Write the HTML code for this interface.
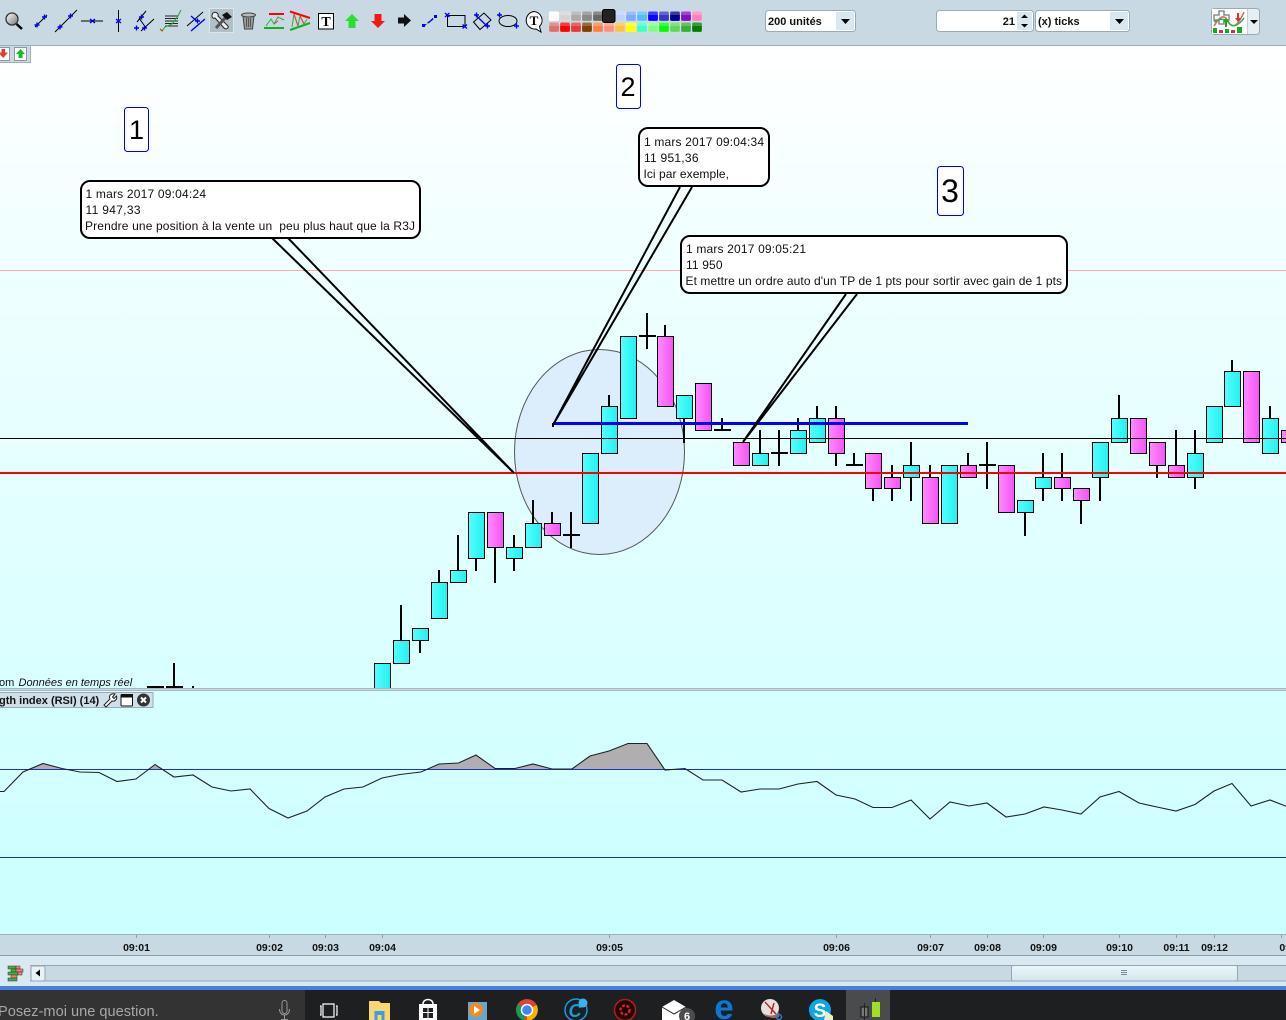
<!DOCTYPE html>
<html><head><meta charset="utf-8"><style>
html,body{margin:0;padding:0;width:1286px;height:1020px;overflow:hidden;background:#c8d9e3}
svg{display:block;font-family:"Liberation Sans",Arial,sans-serif}
.c{fill:url(#gc);stroke:#000;stroke-width:1}
.m{fill:url(#gm);stroke:#000;stroke-width:1}
.t{font-size:12px;fill:#111}
.a{font-size:10.5px;font-weight:bold;fill:#111;text-anchor:middle}
.b{stroke:#00f;stroke-width:1.4;fill:none}
.k{stroke:#000;stroke-width:1;fill:none}
.s{fill:#fff;stroke:#9aabb5;stroke-width:1}
.box{fill:#fff;stroke:#000;stroke-width:2}
.tl{fill:none;stroke:#000;stroke-width:2}
.n{fill:#fff;stroke:#00f;stroke-width:1}
</style></head><body>
<svg width="1286" height="1020" viewBox="0 0 1286 1020" xmlns="http://www.w3.org/2000/svg">
<defs>
<linearGradient id="gc" x1="0" x2="1" y1="0" y2="0"><stop offset="0" stop-color="#55ffff"/><stop offset="1" stop-color="#22f0f0"/></linearGradient>
<linearGradient id="gm" x1="0" x2="1" y1="0" y2="0"><stop offset="0" stop-color="#ff8cff"/><stop offset="1" stop-color="#f552f5"/></linearGradient>
<linearGradient id="bg" x1="0" x2="0" y1="0" y2="1"><stop offset="0" stop-color="#ffffff"/><stop offset=".35" stop-color="#efffff"/><stop offset="1" stop-color="#d9ffff"/></linearGradient>
<linearGradient id="bg2" x1="0" x2="0" y1="0" y2="1"><stop offset="0" stop-color="#d6ffff"/><stop offset="1" stop-color="#ccffff"/></linearGradient>
<linearGradient id="th" x1="0" x2="0" y1="0" y2="1"><stop offset="0" stop-color="#eaf6fa"/><stop offset="1" stop-color="#d4e6ee"/></linearGradient>
<linearGradient id="mg" x1="0" x2="1" y1="0" y2="1"><stop offset="0" stop-color="#fff"/><stop offset="1" stop-color="#777"/></linearGradient>
<clipPath id="cm"><rect x="0" y="46" width="1286" height="642"/></clipPath>
</defs>

<!-- toolbar -->
<rect width="1286" height="45" fill="#c8d9e3"/>
<rect y="45" width="1286" height="1" fill="#9fb0ba"/>

<!-- main chart -->
<rect y="46" width="1286" height="642" fill="url(#bg)"/>
<rect x="0" y="270" width="1286" height="1" fill="#ffaaaa"/>
<ellipse cx="599.5" cy="452" rx="85" ry="102.5" fill="#dcedfb" stroke="#555" stroke-width="1"/>

<g clip-path="url(#cm)">
<path stroke="#000" stroke-width="2" fill="none" d="M401 605V640M420 640V653M439 570V582M458 535V570M476 558V571M495 547V583M514 535V571M533 500V523M552 512V523M571 512V548M563 535H580M609 395V406M647 313V349M639 336H656M665 325V336M684 418V443M722 418V430M714 430H731M760 430V453M779 430V466M771 453H788M798 418V430M817 406V418M836 406V466M854 453V465M846 465H863M873 488V501M892 465V501M911 442V501M930 465V477M968 453V465M987 442V489M979 465H996M1025 512V536M1043 453V501M1062 453V501M1081 500V524M1100 477V501M1119 395V418M1157 465V478M1176 430V465M1195 430V489M1232 360V371M1270 406V418M174 663V687M166 687H183M147 687H164M192 687H194"/>
<rect class="c" x="374.5" y="663.5" width="16" height="30"/>
<rect class="c" x="393.5" y="640.5" width="16" height="23"/>
<rect class="c" x="412.5" y="628.5" width="16" height="12"/>
<rect class="c" x="431.5" y="582.5" width="16" height="36"/>
<rect class="c" x="450.5" y="570.5" width="16" height="12"/>
<rect class="c" x="468.5" y="512.5" width="16" height="46"/>
<rect class="m" x="487.5" y="512.5" width="16" height="35"/>
<rect class="c" x="506.5" y="547.5" width="16" height="11"/>
<rect class="c" x="525.5" y="523.5" width="16" height="24"/>
<rect class="m" x="544.5" y="523.5" width="16" height="12"/>
<rect class="c" x="582.5" y="453.5" width="16" height="70"/>
<rect class="c" x="601.5" y="406.5" width="16" height="47"/>
<rect class="c" x="620.5" y="336.5" width="16" height="82"/>
<rect class="m" x="657.5" y="336.5" width="16" height="70"/>
<rect class="c" x="676.5" y="395.5" width="16" height="23"/>
<rect class="m" x="695.5" y="383.5" width="16" height="47"/>
<rect class="m" x="733.5" y="442.5" width="16" height="23"/>
<rect class="c" x="752.5" y="453.5" width="16" height="12"/>
<rect class="c" x="790.5" y="430.5" width="16" height="23"/>
<rect class="c" x="809.5" y="418.5" width="16" height="24"/>
<rect class="m" x="828.5" y="418.5" width="16" height="35"/>
<rect class="m" x="865.5" y="453.5" width="16" height="35"/>
<rect class="m" x="884.5" y="477.5" width="16" height="11"/>
<rect class="c" x="903.5" y="465.5" width="16" height="12"/>
<rect class="m" x="922.5" y="477.5" width="16" height="46"/>
<rect class="c" x="941.5" y="465.5" width="16" height="58"/>
<rect class="m" x="960.5" y="465.5" width="16" height="12"/>
<rect class="m" x="998.5" y="465.5" width="16" height="47"/>
<rect class="c" x="1017.5" y="500.5" width="16" height="12"/>
<rect class="c" x="1035.5" y="477.5" width="16" height="11"/>
<rect class="m" x="1054.5" y="477.5" width="16" height="11"/>
<rect class="m" x="1073.5" y="488.5" width="16" height="12"/>
<rect class="c" x="1092.5" y="442.5" width="16" height="35"/>
<rect class="c" x="1111.5" y="418.5" width="16" height="24"/>
<rect class="m" x="1130.5" y="418.5" width="16" height="35"/>
<rect class="m" x="1149.5" y="442.5" width="16" height="23"/>
<rect class="m" x="1168.5" y="465.5" width="16" height="12"/>
<rect class="c" x="1187.5" y="453.5" width="16" height="24"/>
<rect class="c" x="1206.5" y="406.5" width="16" height="36"/>
<rect class="c" x="1224.5" y="371.5" width="16" height="35"/>
<rect class="m" x="1243.5" y="371.5" width="16" height="71"/>
<rect class="c" x="1262.5" y="418.5" width="16" height="35"/>
<rect class="m" x="1281.5" y="430.5" width="16" height="12"/>
</g>

<rect x="0" y="438" width="1286" height="1" fill="#000"/>
<rect x="0" y="472" width="1286" height="2" fill="#f00"/>
<rect x="553" y="422" width="415" height="3" fill="#00f"/>

<!-- callout tails -->
<path class="tl" d="M272 238L514 473L288 238"/>
<path class="tl" d="M680 187L553 425L692 187"/>
<rect x="552" y="423" width="2" height="4" fill="#000"/>
<path class="tl" d="M846 294L743 442L857 294"/>

<!-- callouts -->
<rect class="box" x="81" y="181" width="339" height="57" rx="9"/>
<text class="t" x="85.5" y="198" textLength="120.5">1 mars 2017 09:04:24</text>
<text class="t" x="85.5" y="214" textLength="55">11 947,33</text>
<text class="t" x="85" y="230" xml:space="preserve" textLength="330">Prendre une position à la vente un  peu plus haut que la R3J</text>
<rect class="box" x="639" y="128" width="130" height="58" rx="9"/>
<text class="t" x="644" y="146" textLength="120">1 mars 2017 09:04:34</text>
<text class="t" x="644" y="162" textLength="54.500">11 951,36</text>
<text class="t" x="643.5" y="178" textLength="85.500">Ici par exemple,</text>
<rect class="box" x="681" y="236" width="386" height="57" rx="9"/>
<text class="t" x="686" y="253" textLength="120">1 mars 2017 09:05:21</text>
<text class="t" x="686" y="269" textLength="36.500">11 950</text>
<text class="t" x="685.5" y="285" textLength="376.500">Et mettre un ordre auto d'un TP de 1 pts pour sortir avec gain de 1 pts</text>

<!-- number boxes -->
<rect class="n" x="124.5" y="107.5" width="24" height="44" rx="3"/>
<text x="136.5" y="139" font-size="27" text-anchor="middle" fill="#000">1</text>
<rect class="n" x="616.5" y="64.5" width="24" height="44" rx="3"/>
<text x="628" y="96" font-size="27" text-anchor="middle" fill="#000">2</text>
<rect class="n" x="937.5" y="166.5" width="26" height="49" rx="3"/>
<text x="950" y="202" font-size="32" text-anchor="middle" fill="#000">3</text>

<text x="-1" y="686" font-size="11" fill="#111">om</text>
<text x="18.5" y="686" font-size="11" font-style="italic" fill="#111">Données en temps réel</text>

<!-- top-left tab -->
<rect x="0" y="46" width="30" height="16" fill="#c8d9e3"/>
<rect x="0" y="62" width="31" height="1" fill="#9fb0ba"/>
<rect x="30" y="46" width="1" height="17" fill="#9fb0ba"/>
<rect x="-3" y="47.500" width="12.500" height="13" fill="#fff" stroke="#8a9aa4"/>
<path d="M1.500 49H5V52.500H8L3.200 58L-1.500 52.500H1.500Z" fill="#e83838"/>
<rect x="14.500" y="47.500" width="12" height="13" fill="#fff" stroke="#8a9aa4"/>
<path d="M20.500 49L25 54H22.500V58H18.500V54H16Z" fill="#10c020"/>

<!-- RSI panel -->
<rect y="688" width="1286" height="3" fill="#a6b6c0"/>
<rect y="689" width="1286" height="1" fill="#c8d9e3"/>
<rect y="691" width="1286" height="244" fill="url(#bg2)"/>
<path fill="#b0aeae" d="M29 769.500L43 763.500L62 768.500L66 769.500ZM147 769.500L155 764.500L163 769.500ZM428 769.500L439 764L458.500 763L476 755L495 768.500L515 768.500L533 764L552 769.500ZM572 769.500L590 756L609 751L628 743.500L647 743.500L665 769.500Z"/>
<rect y="769" width="1286" height="1" fill="#2030c8"/>
<rect y="857" width="1286" height="1" fill="#2030a0"/>
<polyline fill="none" stroke="#222" stroke-width="1.1" points="-2,791.500 4,791.500 23,772 43,763.500 62,768.500 80,772 99,772.500 117,781.500 136,779 155,764.500 174,777 193,775 212,787 231,791 250,789 269,808.500 288,818 307,811 325,797 344,789 363,787 382,778 400,774.500 421,772 439,764 458.500,763 476,755 495,768.500 515,768.500 533,764 552,769 572,769 590,756 609,751 628,743.500 647,743.500 665,770 685,768.500 703,780 722,780 741,792 760,789 779,789 798,784 817,781.500 836,795 855,799 873,807.500 892,807.500 911,800 930,819 950,802 969,806 987,803 1006,817 1025,814 1044,807 1062,810 1081,814 1100,797 1119,791.500 1139,803 1157,807 1176,811 1195,804.500 1214,791 1232,783.500 1251,806 1270,800 1288,807"/>

<!-- RSI tab -->
<rect x="-2" y="692.500" width="155" height="15" fill="#d0e0ea" stroke="#9aabb5"/>
<text x="-1" y="704" font-size="11" font-weight="bold" fill="#111">gth index (RSI) (14)</text>
<path d="M104 705L110 699C108 695 112 693 115 694L112.500 697L114 698.500L116.500 696C117.500 699 115 702 112 701L106 707Z" fill="#fff" stroke="#222" stroke-width="1"/>
<rect x="121" y="694.500" width="11.500" height="11.500" rx="1" fill="#fff" stroke="#111"/>
<rect x="121" y="694" width="12" height="3.500" fill="#111"/>
<circle cx="143.500" cy="700" r="6.500" fill="#333"/>
<path d="M141 697.500L146 702.500M146 697.500L141 702.500" stroke="#fff" stroke-width="2"/>

<!-- time axis -->
<rect y="935" width="1286" height="20" fill="#c8d9e3"/>
<rect y="934" width="1286" height="1" fill="#9fb0ba"/>
<rect y="955" width="1286" height="1" fill="#8e9ea8"/>
<path stroke="#8e9ea8" d="M136.500 935V938M269.500 935V938M325.500 935V938M382.500 935V938M609.500 935V938M836.500 935V938M930.500 935V938M987.500 935V938M1043.500 935V938M1119.500 935V938M1176.500 935V938M1214.500 935V938M1281.500 935V938"/>
<text class="a" x="136.500" y="951">09:01</text>
<text class="a" x="269.500" y="951">09:02</text>
<text class="a" x="325.500" y="951">09:03</text>
<text class="a" x="382.500" y="951">09:04</text>
<text class="a" x="609.500" y="951">09:05</text>
<text class="a" x="836.500" y="951">09:06</text>
<text class="a" x="930.500" y="951">09:07</text>
<text class="a" x="987.500" y="951">09:08</text>
<text class="a" x="1043.500" y="951">09:09</text>
<text class="a" x="1119.500" y="951">09:10</text>
<text class="a" x="1176.500" y="951">09:11</text>
<text class="a" x="1214.500" y="951">09:12</text>
<text class="a" x="1287" y="951">09:</text>

<!-- scroll bar -->
<rect y="956" width="1286" height="30" fill="#d9e9f2"/>
<rect x="30" y="965" width="1256" height="16" fill="#c8d9e3"/>
<rect x="30" y="965" width="1256" height="1" fill="#96a6b0"/>
<rect x="30" y="980.500" width="1256" height="1" fill="#96a6b0"/>
<rect x="31" y="966" width="14" height="15" rx="2" fill="#e8f3f8" stroke="#96a6b0"/>
<path d="M40 969.500V976.500L35.500 973Z" fill="#000"/>
<rect x="1011.500" y="965.500" width="226" height="15.500" rx="2" fill="url(#th)" stroke="#96a6b0"/>
<path d="M1121 970.500H1127M1121 972.500H1127M1121 974.500H1127" stroke="#7a8a94"/>
<g stroke="#333" stroke-width=".5">
<rect x="8" y="966" width="8" height="3" fill="#40b040"/><rect x="16" y="966" width="4" height="3" fill="#f08080"/>
<rect x="11" y="969" width="8" height="3" fill="#40b040"/><rect x="16" y="969" width="7" height="3" fill="#f08080"/>
<rect x="8" y="972" width="10" height="3" fill="#40b040"/><rect x="18" y="972" width="4" height="3" fill="#f08080"/>
<rect x="11" y="975" width="6" height="3" fill="#f08080"/><rect x="8" y="978" width="9" height="3" fill="#40b040"/>
</g>

<!-- taskbar -->
<rect y="986" width="1286" height="4" fill="#4a7fe0"/>
<rect y="990" width="1286" height="30" fill="#1d1f20"/>
<rect y="990" width="305" height="30" fill="#333333"/>
<text x="-2" y="1016" font-size="14.600" fill="#a8a8a8">Posez-moi une question.</text>
<path d="M282 1003a2.500 2.500 0 0 1 5 0V1011a2.500 2.500 0 0 1-5 0ZM279.500 1009c0 8 10 8 10 0M284.500 1015V1019M281 1019.500H288" fill="none" stroke="#999" stroke-width="1"/>
<path d="M323 1004H334V1017H323ZM320 1006H321V1015H320M336 1006H337V1015H336" fill="none" stroke="#fff" stroke-width="1.200"/>
<!-- folder -->
<path d="M369 1001H379L381 1003H390V1020H369Z" fill="#f7d674"/>
<rect x="374.500" y="1011" width="10" height="9" fill="#3aa0dc"/><rect x="377.500" y="1015" width="4" height="5" fill="#f7d674"/>
<!-- store -->
<path d="M419 1004H437V1020H419Z" fill="#fff"/>
<path d="M423 1004C423 998 433 998 433 1004" fill="none" stroke="#fff" stroke-width="1.500"/>
<path d="M423 1008H427.500V1012H423ZM428.500 1008H433V1012H428.500ZM423 1013H427.500V1018H423ZM428.500 1013H433V1018H428.500Z" fill="#1d1f20"/>
<!-- media -->
<rect x="468" y="1002" width="19" height="18" fill="#6aa6c8"/>
<circle cx="476" cy="1010" r="7" fill="#f58a1f"/><path d="M474 1006L480 1010L474 1014Z" fill="#fff"/>
<!-- chrome -->
<circle cx="527" cy="1010" r="11" fill="#db4437"/>
<path d="M527 1010L518 1004A11 11 0 0 0 524 1020.500Z" fill="#0f9d58"/>
<path d="M527 1010L536.500 1005A11 11 0 0 1 527 1021Z" fill="#f4b400"/>
<circle cx="527" cy="1010" r="5.500" fill="#4285f4" stroke="#fff" stroke-width="1.500"/>
<!-- C icon -->
<circle cx="576" cy="1010" r="11" fill="none" stroke="#1a9ce0" stroke-width="1.500"/>
<text x="575" y="1017" font-size="18" font-style="italic" font-weight="bold" fill="#1a9ce0" text-anchor="middle">C</text>
<circle cx="583" cy="1003" r="4.500" fill="#35b5f0"/>
<!-- red -->
<circle cx="625" cy="1010" r="10.500" fill="#1a0808" stroke="#c01818" stroke-width="1.500"/>
<circle cx="625" cy="1010" r="4.500" fill="none" stroke="#d82020" stroke-width="2.500" stroke-dasharray="3 1.500"/>
<!-- mail -->
<path d="M662 1007L674 1000L686 1007V1020H662Z" fill="#fff"/><path d="M662 1007L674 1014L686 1007" fill="none" stroke="#1d1f20"/>
<circle cx="687" cy="1016" r="8" fill="#4d4d4d"/>
<text x="687" y="1020" font-size="11" font-weight="bold" fill="#fff" text-anchor="middle">6</text>
<!-- edge -->
<text x="724" y="1019" font-size="35" font-weight="bold" fill="#0a78d4" text-anchor="middle">e</text>
<!-- scissor -->
<ellipse cx="770" cy="1008" rx="9" ry="9" fill="#e6e0de"/><path d="M763 1013C768 1017 776 1016 779 1012L779 1017C774 1019 767 1018 763 1013Z" fill="#b06060"/>
<path d="M765 1002L776 1014M774 1003L771 1014" stroke="#b52a2a" stroke-width="1.500"/>
<circle cx="779" cy="1017" r="2.500" fill="none" stroke="#2a7cc0" stroke-width="1.500"/>
<!-- skype -->
<circle cx="820" cy="1010" r="11" fill="#12a5e6"/>
<text x="820" y="1017" font-size="19" font-weight="bold" fill="#fff" text-anchor="middle">S</text>
<path d="M826 1011L833 1016V1020H824Z" fill="#e8f0c8"/>
<!-- active -->
<rect x="846" y="990" width="44" height="30" fill="#4a4b4d"/>
<rect x="861" y="1007" width="7" height="10" fill="#777" stroke="#111"/>
<rect x="872" y="1002" width="8" height="15" fill="#9fe020"/>
<path d="M864.500 1003V1020M875.500 998V1002" stroke="#222"/>

<!-- toolbar icons -->
<rect x="209.500" y="8.500" width="24" height="24" fill="#b0c0c8" stroke="#dbe6ec"/>
<circle cx="12" cy="19" r="6" fill="url(#mg)" stroke="#333" stroke-width="1.300"/>
<path d="M16.500 24L22 29" stroke="#000" stroke-width="2.500"/>
<path class="k" d="M35 27L47 15"/>
<path class="b" d="M34.500 25H39.500M37 22.500V27.500M42 17H47M44.500 14.500V19.500"/>
<path class="k" d="M55 32L77 10"/>
<path class="b" d="M57.500 27H62.500M60 24.500V29.500M68 16H73M70.500 13.500V18.500"/>
<path class="k" d="M81 21H103"/>
<path class="b" d="M90 19L95 23M95 19L90 23"/>
<path class="k" d="M118.500 10V32"/>
<path class="b" d="M116 19L121 23M121 19L116 23"/>
<path class="k" d="M137 22L146 11M141 31L154 19M139 18L146 28"/>
<path class="b" d="M134 28H139M136.500 25.500V30.500M142 28H147M144.500 25.500V30.500M139 17H144M141.500 14.500V19.500"/>
<path d="M165 16H178M165 18.500H178M165 21H178M165 23.500H178M165 26H178" stroke="#222" stroke-width="1"/>
<path d="M160 29L162 31L165 27L172 24L178 16L181 10" fill="none" stroke="#18b030" stroke-width="1"/>
<path d="M160 29L163 31" stroke="#e03030"/>
<path class="k" d="M187 26L203 12"/>
<path class="b" d="M191 31L205 19M191 16L198 22M195 21H200M197.500 18.500V23.500"/>
<!-- tools -->
<path d="M213 13C216 11 219 14 218 16L228 26C229 28 226 30 224 28L215 18C212 19 211 16 213 13Z" fill="#eee" stroke="#222" stroke-width="1"/>
<path d="M216 28L226 17" stroke="#555" stroke-width="3"/>
<path d="M222 15L227 12L232 17L227 20Z" fill="#111"/>
<!-- trash -->
<path d="M243 16H254L252.500 29H244.500Z" fill="#9a9a9a" stroke="#444"/>
<ellipse cx="248.500" cy="15" rx="7" ry="2" fill="#bbb" stroke="#444"/>
<path d="M246.500 18V27M248.500 18V27M250.500 18V27" stroke="#555"/>
<!-- channel -->
<rect x="269" y="13" width="15" height="2" fill="#f00"/><rect x="264" y="27" width="20" height="2" fill="#10b020"/>
<path d="M266 26L271 19L274 24L278 17L284 20" fill="none" stroke="#30b040"/>
<path d="M274 24L278 21" stroke="#e04040"/>
<path d="M290 11.500L310 18" stroke="#f00" stroke-width="2"/><path d="M290 30L310 23" stroke="#10b020" stroke-width="2"/>
<path d="M292 27L294 14L298 26L300 16L304 24L307 19" fill="none" stroke="#30b040"/>
<path d="M294 14L298 26M300 16L304 24" stroke="#e04040" fill="none"/>
<!-- T -->
<rect x="318.500" y="13.500" width="15" height="15.500" fill="#fff" stroke="#000"/>
<text x="326" y="26" font-family="Liberation Serif" font-size="14" font-weight="bold" text-anchor="middle" fill="#000">T</text>
<!-- arrows -->
<path d="M352 14L359 21H355.500V28H348.500V21H345Z" fill="#30d838"/>
<path d="M378 28L385 21H381.500V14H374.500V21H371Z" fill="#f01818"/>
<path d="M411 20.500L404 14V17.500H398V23.500H404V27Z" fill="#111"/>
<path d="M424 26L436 16" stroke="#00f" stroke-dasharray="3 1.500"/>
<rect x="422" y="24" width="3" height="3" fill="#00f"/><rect x="434" y="15" width="3" height="3" fill="#00f"/>
<path class="b" d="M428 23L433 19"/>
<rect x="447.500" y="15.500" width="17.500" height="11" class="k"/>
<path class="b" d="M445 13L449.500 17M449.500 13L445 17M462.500 24.500L467 28.500M467 24.500L462.500 28.500"/>
<path class="k" d="M473.500 22L484 13L491 20L480 29.500Z"/>
<path class="b" d="M475 14.500L488 27M474 15H479M476.500 12.500V17.500M485 26H490M487.500 23.500V28.500"/>
<ellipse cx="508" cy="21" rx="9" ry="5.500" class="k"/>
<path class="b" d="M497 15H502M499.500 12.500V17.500M514 26H519M516.500 23.500V28.500"/>
<path d="M534 11.500a8.800 8.800 0 1 0 2 17.500L541 32L539.500 26.500A8.800 8.800 0 0 0 534 11.500Z" fill="#fff" stroke="#000"/>
<text x="534" y="25" font-family="Liberation Serif" font-size="13" font-weight="bold" text-anchor="middle" fill="#000">T</text>

<!-- palette -->
<g stroke="#fff" stroke-opacity=".35" stroke-width=".5">
<rect x="549" y="11.500" width="10" height="9.500" rx="1.500" fill="#ffffff"/>
<rect x="560" y="11.500" width="10" height="9.500" rx="1.500" fill="#d4d4d4"/>
<rect x="571" y="11.500" width="10" height="9.500" rx="1.500" fill="#ababab"/>
<rect x="582" y="11.500" width="10" height="9.500" rx="1.500" fill="#8a8a8a"/>
<rect x="593" y="11.500" width="10" height="9.500" rx="1.500" fill="#686868"/>
<rect x="615" y="11.500" width="10" height="9.500" rx="1.500" fill="#c0d0ff"/>
<rect x="626" y="11.500" width="10" height="9.500" rx="1.500" fill="#80a8ff"/>
<rect x="637" y="11.500" width="10" height="9.500" rx="1.500" fill="#55bbff"/>
<rect x="648" y="11.500" width="10" height="9.500" rx="1.500" fill="#0808ff"/>
<rect x="659" y="11.500" width="10" height="9.500" rx="1.500" fill="#3838cc"/>
<rect x="670" y="11.500" width="10" height="9.500" rx="1.500" fill="#000090"/>
<rect x="681" y="11.500" width="10" height="9.500" rx="1.500" fill="#8010c0"/>
<rect x="692" y="11.500" width="10" height="9.500" rx="1.500" fill="#ff80c0"/>
<rect x="549" y="22.500" width="10" height="9.500" rx="1.500" fill="#e07070"/>
<rect x="560" y="22.500" width="10" height="9.500" rx="1.500" fill="#ff0000"/>
<rect x="571" y="22.500" width="10" height="9.500" rx="1.500" fill="#e83838"/>
<rect x="582" y="22.500" width="10" height="9.500" rx="1.500" fill="#804000"/>
<rect x="593" y="22.500" width="10" height="9.500" rx="1.500" fill="#ff8040"/>
<rect x="604" y="22.500" width="10" height="9.500" rx="1.500" fill="#ff9080"/>
<rect x="615" y="22.500" width="10" height="9.500" rx="1.500" fill="#ffc040"/>
<rect x="626" y="22.500" width="10" height="9.500" rx="1.500" fill="#ffff00"/>
<rect x="637" y="22.500" width="10" height="9.500" rx="1.500" fill="#40ffc0"/>
<rect x="648" y="22.500" width="10" height="9.500" rx="1.500" fill="#80ff80"/>
<rect x="659" y="22.500" width="10" height="9.500" rx="1.500" fill="#00ff00"/>
<rect x="670" y="22.500" width="10" height="9.500" rx="1.500" fill="#60d860"/>
<rect x="681" y="22.500" width="10" height="9.500" rx="1.500" fill="#38b038"/>
<rect x="692" y="22.500" width="10" height="9.500" rx="1.500" fill="#008000"/>
</g>
<rect x="549" y="12" width="153" height="3" fill="#fff" opacity=".22"/>
<rect x="549" y="23" width="153" height="3" fill="#fff" opacity=".22"/>
<rect x="602.500" y="9.500" width="12.500" height="13" rx="2" fill="#222" stroke="#000"/>

<!-- controls -->
<rect class="s" x="765.500" y="10.500" width="90" height="21" rx="3"/>
<rect x="836" y="12" width="18" height="18" fill="#d9e7ee"/>
<path d="M841 19H850L845.500 24Z" fill="#000"/>
<text x="768" y="25" font-size="11" font-weight="bold" fill="#111">200 unités</text>
<rect class="s" x="936.500" y="10.500" width="97" height="21" rx="3"/>
<rect x="1017" y="12" width="15" height="18" fill="#d9e7ee"/>
<path d="M1021 18H1028L1024.500 14.500ZM1021 24H1028L1024.500 27.500Z" fill="#000"/>
<text x="1015" y="25" font-size="11" font-weight="bold" fill="#111" text-anchor="end">21</text>
<rect class="s" x="1035.500" y="10.500" width="94" height="21" rx="3"/>
<rect x="1110" y="12" width="18" height="18" fill="#d9e7ee"/>
<path d="M1115 19H1124L1119.500 24Z" fill="#000"/>
<text x="1038" y="25" font-size="11" font-weight="bold" fill="#111">(x) ticks</text>

<!-- add indicator button -->
<rect x="1211.500" y="8.500" width="48" height="26" rx="3" fill="#e6f0f4" stroke="#9aabb5"/>
<rect x="1212" y="9" width="35" height="25" fill="#fff"/>
<path d="M1247.500 9V34" stroke="#c2d0d8"/>
<path d="M1219 11H1224V15H1229V20H1224V24H1219V20H1214V15H1219Z" fill="#fff" stroke="#777" stroke-width="1.300"/>
<path d="M1214 26C1220 16 1224 14 1228 21C1232 30 1238 26 1244 12" fill="none" stroke="#e06060" stroke-width="1.500"/>
<path d="M1214 22C1220 18 1226 18 1230 24C1234 28 1240 24 1244 18" fill="none" stroke="#30b040" stroke-width="1.500"/>
<path d="M1225 27V22H1223L1226 18L1229 22H1227V27Z" fill="#10b020"/>
<path d="M1237 13V18H1235L1238 22L1241 18H1239V13Z" fill="#e03030"/>
<rect x="1213" y="28" width="4" height="5" fill="#10b020"/><rect x="1219" y="30" width="4" height="3" fill="#d83048"/><rect x="1225" y="29" width="4" height="4" fill="#10b020"/><rect x="1231" y="30" width="4" height="3" fill="#d83048"/><rect x="1237" y="27" width="5" height="6" fill="#10b020"/>
<path d="M1250 20H1258L1254 24Z" fill="#000"/>
</svg>
</body></html>
